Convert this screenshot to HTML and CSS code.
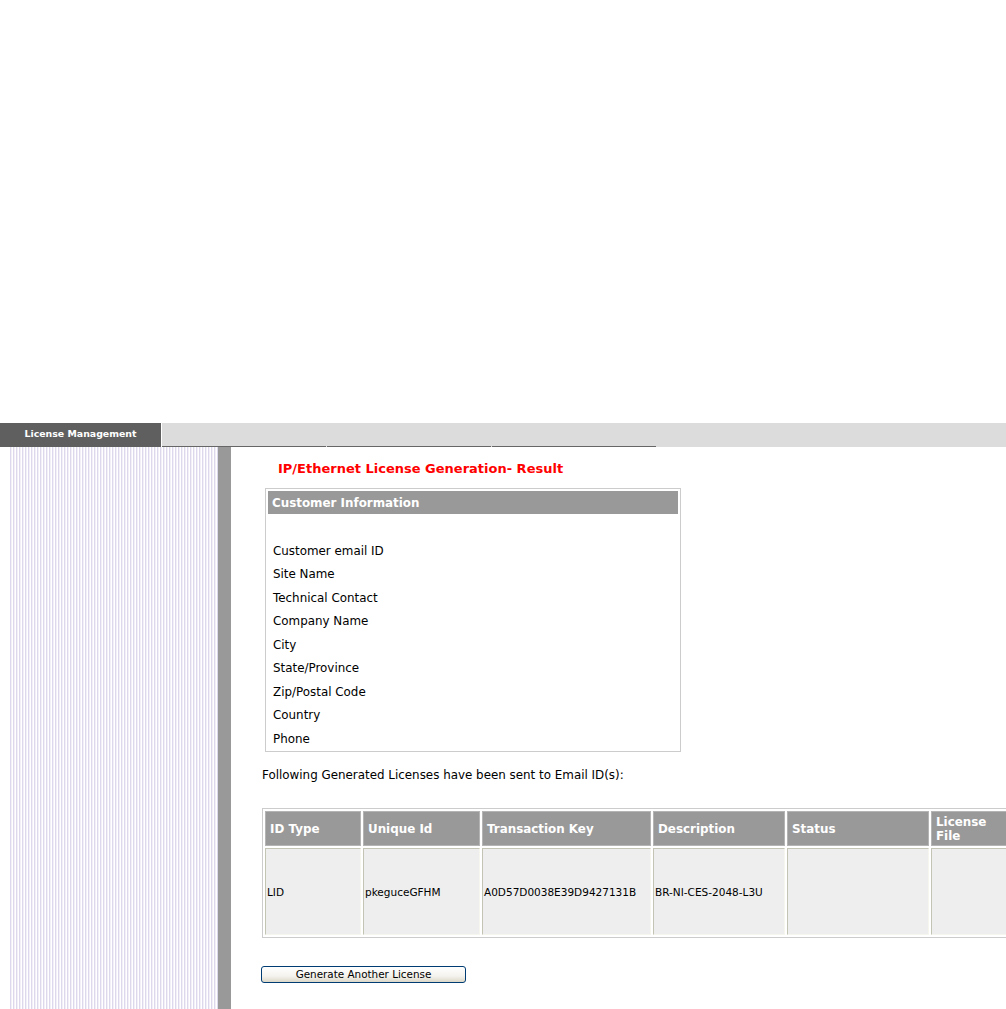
FILE: index.html
```html
<!DOCTYPE html>
<html>
<head>
<meta charset="utf-8">
<title>IP/Ethernet License Generation - Result</title>
<link rel="stylesheet" href="styles.css">
</head>
<body>
<div class="top-space"></div>
<div class="nav">
  <div class="nav-tab active">License Management</div>
  <div class="nav-rest">
    <div class="nav-tab blank"></div>
    <div class="nav-tab blank"></div>
    <div class="nav-tab blank"></div>
  </div>
</div>
<div class="main">
  <div class="sidebar">
    <div class="stripes"></div>
    <div class="side-bar-edge"></div>
  </div>
  <div class="content">
    <div class="page-title">IP/Ethernet License Generation- Result</div>
    <div class="cust">
      <div class="cust-head">Customer Information</div>
      <div class="cust-row"></div>
      <div class="cust-row">Customer email ID</div>
      <div class="cust-row">Site Name</div>
      <div class="cust-row">Technical Contact</div>
      <div class="cust-row">Company Name</div>
      <div class="cust-row">City</div>
      <div class="cust-row">State/Province</div>
      <div class="cust-row">Zip/Postal Code</div>
      <div class="cust-row">Country</div>
      <div class="cust-row">Phone</div>
    </div>
    <div class="sent-text">Following Generated Licenses have been sent to Email ID(s):</div>
    <table class="lic-table">
      <colgroup>
        <col class="c1"><col class="c2"><col class="c3"><col class="c4"><col class="c5"><col class="c6">
      </colgroup>
      <thead>
        <tr>
          <th>ID Type</th>
          <th>Unique Id</th>
          <th>Transaction Key</th>
          <th>Description</th>
          <th>Status</th>
          <th>License File</th>
        </tr>
      </thead>
      <tbody>
        <tr>
          <td>LID</td>
          <td>pkeguceGFHM</td>
          <td>A0D57D0038E39D9427131B</td>
          <td>BR-NI-CES-2048-L3U</td>
          <td></td>
          <td></td>
        </tr>
      </tbody>
    </table>
    <button class="gen-btn" type="button">Generate Another License</button>
  </div>
</div>
</body>
</html>
```

FILE: styles.css
```css
html, body {
  margin: 0;
  padding: 0;
  height: 100%;
  overflow: hidden;
  background: #fff;
}
body {
  display: flex;
  flex-direction: column;
  font-family: "DejaVu Sans", Verdana, sans-serif;
  font-size: 11.9px;
  color: #000;
}
.top-space {
  height: 423px;
  flex: none;
}
.nav {
  display: flex;
  height: 24px;
  flex: none;
}
.nav-tab.active {
  width: 161px;
  background: #5f5f5f;
  color: #fff;
  font-weight: bold;
  font-size: 9.4px;
  text-align: center;
  line-height: 22px;
}
.nav-rest {
  flex: 1;
  margin-left: 1px;
  background: #dcdcdc;
  display: flex;
  align-items: flex-end;
  width: 844px;
}
.nav-tab.blank {
  width: 164px;
  height: 1px;
  background: #666;
  margin-right: 1px;
}
.main {
  flex: 1;
  display: flex;
  min-height: 0;
}
.sidebar {
  display: flex;
  padding-left: 10px;
  flex: none;
}
.stripes {
  width: 208px;
  background: repeating-linear-gradient(90deg, #ddd8ec 0 1px, #f3f1f7 1px 2px, #ffffff 2px 3px);
}
.side-bar-edge {
  width: 13px;
  background: #999;
}
.content {
  flex: 1;
  padding-left: 30px;
  min-width: 0;
}
.page-title {
  margin: 13px 0 0 17px;
  font-family: "DejaVu Sans", sans-serif;
  font-weight: bold;
  font-size: 13px;
  line-height: 17px;
  color: #ff0000;
}
.cust {
  margin: 11px 0 0 4px;
  width: 416px;
  box-sizing: border-box;
  border: 1px solid #ccc;
  padding: 2px;
}
.cust-head {
  height: 23px;
  box-sizing: border-box;
  padding: 2px 0 0 4px;
  line-height: 21px;
  background: #999;
  color: #fff;
  font-weight: bold;
}
.cust-row {
  height: 23.5px;
  box-sizing: border-box;
  padding: 3px 0 0 5px;
  line-height: 20.5px;
}
.sent-text {
  margin: 16px 0 0 1px;
  line-height: 14px;
}
.lic-table {
  margin: 26px 0 0 1px;
  border: 1px solid #ccc;
  border-spacing: 2px;
  table-layout: fixed;
  width: 751px;
}
.c1 { width: 96px; }
.c2 { width: 117px; }
.c3 { width: 169px; }
.c4 { width: 132px; }
.c5 { width: 142px; }
.c6 { width: 80px; }
.lic-table th {
  height: 32px;
  padding: 1px 4px 0;
  background: #999;
  color: #fff;
  font-weight: bold;
  text-align: left;
  vertical-align: middle;
  line-height: 14px;
  border: 1px solid #b4b4b4;
  font-size: 11.9px;
}
.lic-table td {
  height: 85px;
  padding: 0 1px;
  background: #eeeeee;
  vertical-align: middle;
  border: 1px solid;
  border-color: #c4c4b4 #f6f6ee #f6f6ee #c4c4b4;
  font-size: 10.5px;
}
.gen-btn {
  display: block;
  margin: 28px 0 0 0;
  width: 205px;
  height: 17px;
  padding: 0;
  border: 1px solid #003c74;
  border-radius: 3px;
  background: linear-gradient(#ffffff, #f4f3ee 60%, #dcd8c8);
  font-family: "DejaVu Sans", Verdana, sans-serif;
  font-size: 10.4px;
  color: #000;
  line-height: 15px;
}
```
